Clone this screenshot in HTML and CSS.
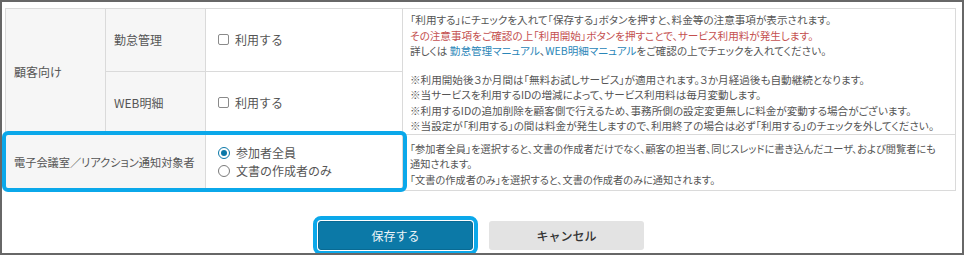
FILE: index.html
```html
<!DOCTYPE html>
<html lang="ja">
<head>
    <meta charset="UTF-8">
    <meta name="viewport" content="width=device-width, initial-scale=1.0">
    <title>利用設定</title>
    <link rel="stylesheet" href="styles.css">
</head>
<body>
    <div class="frame">
        <table class="settings">
            <tr class="row-top">
                <th class="group" rowspan="2">顧客向け</th>
                <th class="item">勤怠管理</th>
                <td class="ctrl">
                    <label class="check"><span class="box"></span>利用する</label>
                </td>
                <td class="note" rowspan="2">
                    <p>「利用する」にチェックを入れて「保存する」ボタンを押すと、料金等の注意事項が表示されます。<br>
                    <span class="warn">その注意事項をご確認の上「利用開始」ボタンを押すことで、サービス利用料が発生します。</span><br>
                    詳しくは <a href="#">勤怠管理マニュアル</a>、<a href="#">WEB明細マニュアル</a>をご確認の上でチェックを入れてください。</p>
                    <p>※利用開始後３か月間は「無料お試しサービス」が適用されます。３か月経過後も自動継続となります。<br>
                    ※当サービスを利用するIDの増減によって、サービス利用料は毎月変動します。<br>
                    ※利用するIDの追加削除を顧客側で行えるため、事務所側の設定変更無しに料金が変動する場合がございます。<br>
                    ※当設定が「利用する」の間は料金が発生しますので、利用終了の場合は必ず「利用する」のチェックを外してください。</p>
                </td>
            </tr>
            <tr class="row-mid">
                <th class="item">WEB明細</th>
                <td class="ctrl">
                    <label class="check"><span class="box"></span>利用する</label>
                </td>
            </tr>
            <tr class="row-notify">
                <th class="item" colspan="2">電子会議室／リアクション通知対象者</th>
                <td class="ctrl">
                    <label class="radio"><span class="dot is-on"></span>参加者全員</label>
                    <label class="radio"><span class="dot"></span>文書の作成者のみ</label>
                </td>
                <td class="note">
                    <p>「参加者全員」を選択すると、文書の作成者だけでなく、顧客の担当者、同じスレッドに書き込んだユーザ、および閲覧者にも<br>
                    通知されます。<br>
                    「文書の作成者のみ」を選択すると、文書の作成者のみに通知されます。</p>
                </td>
            </tr>
        </table>

        <div class="actions">
            <button class="btn btn-save is-marked">保存する</button>
            <button class="btn btn-cancel">キャンセル</button>
        </div>

        <!-- 注目枠 -->
        <div class="mark mark-row"></div>
    </div>
</body>
</html>
```

FILE: styles.css
```css
* {
    margin: 0;
    padding: 0;
    box-sizing: border-box;
}

body {
    background: #fff;
    font-family: "Noto Sans CJK JP", "Noto Sans", sans-serif;
    color: #555;
}

.frame {
    position: relative;
    width: 964px;
    height: 255px;
    border: 2px solid #676767;
    padding: 6px 7px 0 3px;
    overflow: hidden;
}

.settings {
    width: 950px;
    border-collapse: collapse;
    table-layout: fixed;
}

.settings th,
.settings td {
    border: 1px solid #dadada;
    text-align: left;
    font-weight: normal;
}

.settings th {
    background: #f6f6f6;
    font-size: 12px;
    padding: 0 8px;
}

.settings .group {
    width: 100px;
}

.settings .item {
    width: 100px;
}

.row-notify .item {
    font-size: 11.2px;
    padding: 0 8px;
    white-space: nowrap;
    font-feature-settings: "palt";
}

.ctrl {
    width: 197px;
    padding: 0 12px;
    font-size: 12px;
}

.row-top {
    height: 62px;
}

.row-mid {
    height: 62px;
}

.row-notify {
    height: 56px;
}

.note {
    width: 553px;
    vertical-align: top;
    padding: 3px 7px 0;
    font-size: 10.6px;
    line-height: 15.5px;
    white-space: nowrap;
    font-feature-settings: "palt";
}

.note p + p {
    margin-top: 13px;
}

.row-notify .note {
    padding-top: 6px;
    font-size: 10.2px;
}

.warn {
    color: #c4504f;
}

.note a {
    color: #2a86b8;
    text-decoration: none;
}

.check,
.radio {
    display: flex;
    align-items: center;
    gap: 6px;
}

.box {
    width: 11px;
    height: 11px;
    border: 1px solid #8a8a8a;
    border-radius: 2px;
    background: #fff;
}

.radio {
    line-height: 18px;
}

.dot {
    width: 12px;
    height: 12px;
    border: 1px solid #7a7a7a;
    border-radius: 50%;
    background: #fff;
    position: relative;
}

.dot.is-on {
    border-color: #0b78a8;
}

.dot.is-on::after {
    content: "";
    position: absolute;
    top: 2px;
    left: 2px;
    width: 6px;
    height: 6px;
    border-radius: 50%;
    background: #0b78a8;
}

.actions {
    display: flex;
    justify-content: center;
    gap: 16px;
    margin-top: 30px;
    padding-left: 2px;
}

.btn {
    width: 155px;
    height: 29px;
    border: none;
    border-radius: 3px;
    font-family: inherit;
    font-size: 12px;
    cursor: pointer;
}

.btn-save {
    background: #0c79a7;
    color: #eef5f8;
    border: 1px solid #0a6a93;
}

.btn-cancel {
    background: #e3e3e3;
    color: #333;
    font-weight: 500;
}

.is-marked {
    outline: 4px solid #0ba8ea;
    outline-offset: 1px;
}

.mark {
    position: absolute;
    border: 4px solid #0ba8ea;
    border-radius: 6px;
    pointer-events: none;
}

.mark-row {
    left: 0;
    top: 129px;
    width: 405px;
    height: 61px;
}
```
